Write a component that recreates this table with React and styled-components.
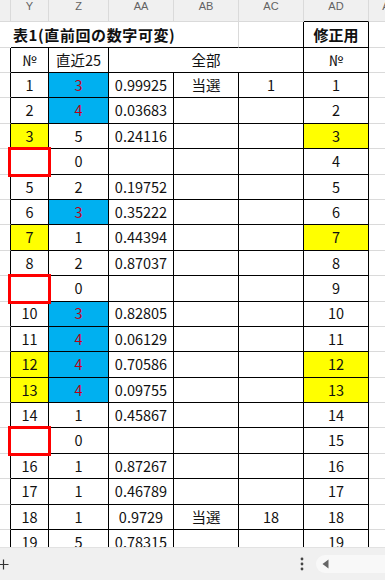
import React from 'react';
import styled, { createGlobalStyle } from 'styled-components';

const COLS = '11px 38px 60px 65px 65px 65px 65px 42px';
const GRID = '#dadada';
const INK = '#000';

const GlobalStyle = createGlobalStyle`
  html, body { margin: 0; padding: 0; background: #fff; overflow: hidden; }
  body { font-family: "Noto Sans CJK JP", "Noto Sans", sans-serif; }
`;

const Screen = styled.div`
  width: 385px;
  height: 580px;
  display: flex;
  flex-direction: column;
  overflow: hidden;
  background: #fff;
`;

const ColumnHeaderBar = styled.div`
  flex: none;
  display: grid;
  grid-template-columns: ${COLS};
  height: 22px;
  background: #f0f0f0;
`;

const ColLabel = styled.div`
  box-sizing: border-box;
  border-right: 1px solid ${GRID};
  border-bottom: 1px solid ${(p) => (p.$boxed ? INK : GRID)};
  font-family: "Liberation Sans", Arial, sans-serif;
  font-size: 11px;
  line-height: 13px;
  color: #626262;
  text-align: center;
  white-space: nowrap;
`;

const Viewport = styled.div`
  flex: 1;
  min-height: 0;
  overflow: hidden;
`;

const Sheet = styled.div`
  display: grid;
  grid-template-columns: ${COLS};
  grid-template-rows: 26px 25px;
  grid-auto-rows: 25.4px;
`;

const Gutter = styled.div`
  box-sizing: border-box;
  border-bottom: 1px solid ${GRID};
  border-right: 1px solid ${(p) => p.$edge || 'transparent'};
`;

const Trail = styled.div`
  box-sizing: border-box;
  border-bottom: 1px solid ${GRID};
`;

const TitleText = styled.div`
  grid-column: span 4;
  box-sizing: border-box;
  border-right: 1px solid ${GRID};
  border-bottom: 1px solid ${INK};
  display: flex;
  align-items: center;
  padding-left: 2px;
  font-size: 15px;
  font-weight: 700;
  color: #111;
  white-space: nowrap;
  letter-spacing: 0.6px;
`;

const Cell = styled.div`
  position: relative;
  box-sizing: border-box;
  grid-column: ${(p) => (p.$span ? `span ${p.$span}` : 'auto')};
  border-right: 1px solid ${INK};
  border-bottom: 1px solid ${INK};
  background: ${(p) => p.$fill || '#fff'};
  color: ${(p) => p.$tone || '#111'};
  font-size: ${(p) => (p.$bold ? '15px' : '14.5px')};
  font-weight: ${(p) => (p.$bold ? 700 : 400)};
  display: flex;
  align-items: center;
  justify-content: center;
  white-space: nowrap;
  line-height: 1;

  ${(p) =>
    p.$flag &&
    `
    &::after {
      content: '';
      position: absolute;
      left: -3px;
      right: -3px;
      top: -2px;
      bottom: -3px;
      border: 3px solid #ff0000;
      z-index: 2;
      pointer-events: none;
    }
  `}
`;

const Bar = styled.div`
  flex: none;
  height: 33px;
  box-sizing: border-box;
  border-top: 1px solid #e2e2e2;
  background: #f0f0f0;
  display: flex;
  align-items: center;
  overflow: hidden;
`;

const PlusIcon = styled.svg`
  flex: none;
  margin-left: -2px;
  width: 11px;
  height: 11px;
`;

const MoreDots = styled.svg`
  flex: none;
  margin-left: auto;
  margin-right: 11px;
  width: 6px;
  height: 14px;
`;

const ScrollPill = styled.div`
  flex: none;
  width: 95px;
  margin-right: -26px;
  height: 18px;
  border-radius: 9px;
  background: #f8f8f8;
  display: flex;
  align-items: center;
  padding-left: 6px;
  box-sizing: border-box;
`;

const LeftArrow = styled.svg`
  width: 7px;
  height: 10px;
`;

const YELLOW = '#ffff00';
const BLUE = '#00b0f0';
const RED = '#c00018';

const rows = [
  { n: '1', z: '3', zb: 1, aa: '0.99925', ab: '当選', ac: '1' },
  { n: '2', z: '4', zb: 1, aa: '0.03683' },
  { n: '3', y: 1, z: '5', aa: '0.24116' },
  { n: '4', flag: 1, z: '0', aa: '' },
  { n: '5', z: '2', aa: '0.19752' },
  { n: '6', z: '3', zb: 1, aa: '0.35222' },
  { n: '7', y: 1, z: '1', aa: '0.44394' },
  { n: '8', z: '2', aa: '0.87037' },
  { n: '9', flag: 1, z: '0', aa: '' },
  { n: '10', z: '3', zb: 1, aa: '0.82805' },
  { n: '11', z: '4', zb: 1, aa: '0.06129' },
  { n: '12', y: 1, z: '4', zb: 1, aa: '0.70586' },
  { n: '13', y: 1, z: '4', zb: 1, aa: '0.09755' },
  { n: '14', z: '1', aa: '0.45867' },
  { n: '15', flag: 1, z: '0', aa: '' },
  { n: '16', z: '1', aa: '0.87267' },
  { n: '17', z: '1', aa: '0.46789' },
  { n: '18', z: '1', aa: '0.9729', ab: '当選', ac: '18' },
  { n: '19', z: '5', aa: '0.78315' },
];

const letters = ['', 'Y', 'Z', 'AA', 'AB', 'AC', 'AD', 'AE'];

export default function App() {
  return (
    <Screen>
      <GlobalStyle />
      <ColumnHeaderBar>
        {letters.map((l, i) => (
          <ColLabel key={i} $boxed={l === 'AD'}>
            {l}
          </ColLabel>
        ))}
      </ColumnHeaderBar>
      <Viewport>
        <Sheet>
          <Gutter />
          <TitleText>表1(直前回の数字可変)</TitleText>
          <Cell />
          <Cell $bold>修正用</Cell>
          <Trail />

          <Gutter $edge={INK} />
          <Cell>№</Cell>
          <Cell>直近25</Cell>
          <Cell $span={3}>全部</Cell>
          <Cell>№</Cell>
          <Trail />

          {rows.map((r) => (
            <React.Fragment key={r.n}>
              <Gutter $edge={INK} />
              <Cell $fill={r.y ? YELLOW : undefined} $flag={!!r.flag}>
                {r.flag ? '' : r.n}
              </Cell>
              <Cell $fill={r.zb ? BLUE : undefined} $tone={r.zb ? RED : undefined}>
                {r.z}
              </Cell>
              <Cell>{r.aa}</Cell>
              <Cell>{r.ab || ''}</Cell>
              <Cell>{r.ac || ''}</Cell>
              <Cell $fill={r.y ? YELLOW : undefined}>{r.n}</Cell>
              <Trail />
            </React.Fragment>
          ))}
        </Sheet>
      </Viewport>
      <Bar>
        <PlusIcon viewBox="0 0 11 11">
          <path d="M5.5 0.5V10.5M0.5 5.5H10.5" stroke="#333" strokeWidth="1.2" fill="none" />
        </PlusIcon>
        <MoreDots viewBox="0 0 6 14">
          <circle cx="3" cy="2" r="1.4" fill="#444" />
          <circle cx="3" cy="7" r="1.4" fill="#444" />
          <circle cx="3" cy="12" r="1.4" fill="#444" />
        </MoreDots>
        <ScrollPill>
          <LeftArrow viewBox="0 0 7 10">
            <path d="M6.5 0.5V9.5L0.5 5Z" fill="#666" />
          </LeftArrow>
        </ScrollPill>
      </Bar>
    </Screen>
  );
}
